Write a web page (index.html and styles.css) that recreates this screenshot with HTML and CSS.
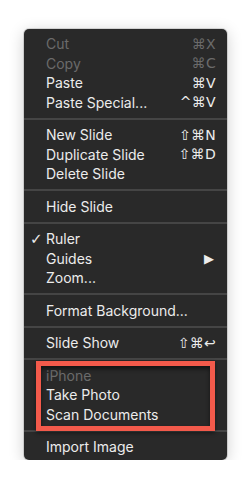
FILE: index.html
```html
<!DOCTYPE html>
<html lang="en">

<head>
    <meta charset="UTF-8">
    <meta name="viewport" content="width=device-width, initial-scale=1.0">
    <title>Context Menu</title>
    <link rel="stylesheet" href="styles.css">
</head>

<body>
    <!-- Keynote style context menu -->
    <ul class="menu">
        <li class="item disabled"><span class="label">Cut</span><span class="key">⌘X</span></li>
        <li class="item disabled"><span class="label">Copy</span><span class="key">⌘C</span></li>
        <li class="item"><span class="label">Paste</span><span class="key">⌘V</span></li>
        <li class="item"><span class="label">Paste Special...</span><span class="key">^⌘V</span></li>
        <li class="sep"></li>
        <li class="item"><span class="label">New Slide</span><span class="key">⇧⌘N</span></li>
        <li class="item"><span class="label">Duplicate Slide</span><span class="key">⇧⌘D</span></li>
        <li class="item"><span class="label">Delete Slide</span></li>
        <li class="sep"></li>
        <li class="item"><span class="label">Hide Slide</span></li>
        <li class="sep"></li>
        <li class="item checked"><span class="label">Ruler</span></li>
        <li class="item"><span class="label">Guides</span><span class="arrow">▶</span></li>
        <li class="item"><span class="label">Zoom...</span></li>
        <li class="sep"></li>
        <li class="item"><span class="label">Format Background...</span></li>
        <li class="sep"></li>
        <li class="item"><span class="label">Slide Show</span><span class="key">⇧⌘↩</span></li>
        <li class="sep"></li>
        <li class="group">
            <ul class="group-list">
                <li class="item disabled"><span class="label">iPhone</span></li>
                <li class="item"><span class="label">Take Photo</span></li>
                <li class="item"><span class="label">Scan Documents</span></li>
            </ul>
        </li>
        <li class="sep"></li>
        <li class="item"><span class="label">Import Image</span></li>
    </ul>
</body>

</html>
```

FILE: styles.css
```css
/* Page */
body {
    margin: 0;
    background: #fff;
    font-family: Inter, "Liberation Sans", sans-serif;
}

ul {
    list-style: none;
    margin: 0;
    padding: 0;
}

/* Menu panel */
.menu {
    width: 203px;
    margin: 29px 0 0 24px;
    padding: 5px 0 3px;
    background: #292929;
    border-radius: 5px;
    box-shadow: 0 0 0 1px rgba(0, 0, 0, 0.12), 0 3px 16px rgba(0, 0, 0, 0.2);
}

.item {
    display: flex;
    align-items: center;
    height: 19.5px;
    padding: 0 11px 0 22px;
    font-size: 14px;
    color: #ececec;
    position: relative;
}

.item .label {
    flex: 1;
    white-space: nowrap;
}

.item .key {
    font-family: "DejaVu Sans", sans-serif;
    font-size: 14px;
    letter-spacing: 0.3px;
}

.item .arrow {
    font-family: "DejaVu Sans", sans-serif;
    font-size: 13px;
    margin-right: 2px;
}

.disabled {
    color: #6b6b6b;
}

.checked::before {
    content: "✓";
    position: absolute;
    left: 6px;
    font-family: "DejaVu Sans", sans-serif;
    font-size: 15px;
    font-weight: bold;
}

.sep {
    height: 2px;
    margin: 5.5px 0;
    background: #454545;
}

/* Red highlight around the iPhone group */
.group {
    position: relative;
}

.group::after {
    content: "";
    position: absolute;
    top: -5px;
    bottom: -7px;
    left: 12px;
    right: 12px;
    border: 5px solid #f35a4b;
    box-shadow: inset 0 3px 4px rgba(0, 0, 0, 0.55), 0 2px 4px rgba(0, 0, 0, 0.45);
}
```
